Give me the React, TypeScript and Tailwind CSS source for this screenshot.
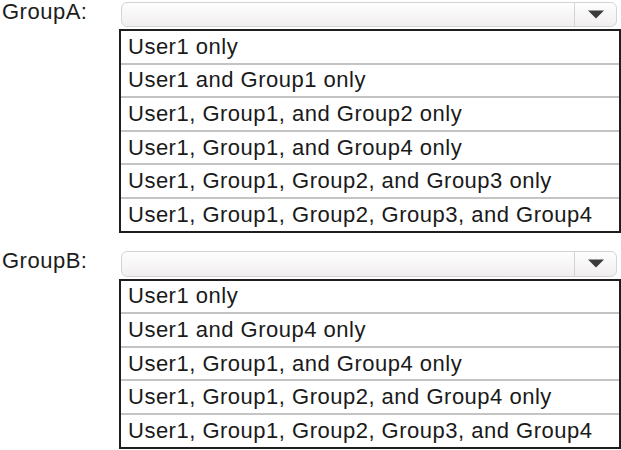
const groups = [
  {
    name: "GroupA:",
    options: [
      "User1 only",
      "User1 and Group1 only",
      "User1, Group1, and Group2 only",
      "User1, Group1, and Group4 only",
      "User1, Group1, Group2, and Group3 only",
      "User1, Group1, Group2, Group3, and Group4",
    ],
  },
  {
    name: "GroupB:",
    options: [
      "User1 only",
      "User1 and Group4 only",
      "User1, Group1, and Group4 only",
      "User1, Group1, Group2, and Group4 only",
      "User1, Group1, Group2, Group3, and Group4",
    ],
  },
];

const Dropdown = ({ name, options }: { name: string; options: string[] }) => {
  return (
    <div className="flex">
      <div className="w-[119px] pl-[2px] pt-[0.5px] text-[22px] leading-[22px] tracking-[0.5px] text-[#1c1c1c]">
        {name}
      </div>
      <div className="flex w-[502px] flex-col">
        <div className="ml-[2px] mr-[4px] mt-[1.5px] flex h-[25.5px] rounded-[6px] border border-[#d6d3d3] bg-gradient-to-b from-[#fefefe] to-[#f1eeee]">
          <div className="flex-1" />
          <div className="flex w-[42px] items-center justify-center border-l border-[#d6d3d3]">
            <svg width="18" height="9" viewBox="0 0 18 9">
              <path d="M1 0.5 L17 0.5 L9 8.5 Z" fill="#3a3a3a" />
            </svg>
          </div>
        </div>
        <div className="mt-[2px] flex flex-col border-2 border-[#1e1e1e] bg-white">
          {options.map((opt, i) => (
            <div
              key={i}
              className={
                "box-content flex h-[31.6px] items-center pl-[7px] text-[22px] leading-none tracking-[0.5px] text-[#1a1a1a] " +
                (i > 0 ? "border-t-2 border-[#c4c4c4]" : "")
              }
            >
              {opt}
            </div>
          ))}
        </div>
      </div>
    </div>
  );
};

export default function App() {
  return (
    <div
      className="flex h-[450px] w-[621px] flex-col gap-[17px] overflow-hidden bg-white"
      style={{ fontFamily: '"Liberation Sans", Arial, sans-serif' }}
    >
      {groups.map((g) => (
        <Dropdown key={g.name} name={g.name} options={g.options} />
      ))}
    </div>
  );
}
